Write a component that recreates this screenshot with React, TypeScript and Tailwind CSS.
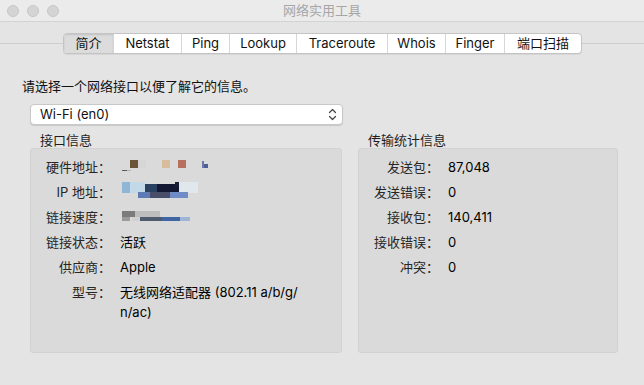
import React from 'react';

const tabs = [
  { label: '简介', w: 'w-[49px]', active: true },
  { label: 'Netstat', w: 'w-[68px]' },
  { label: 'Ping', w: 'w-[48px]' },
  { label: 'Lookup', w: 'w-[67px]' },
  { label: 'Traceroute', w: 'w-[91px]' },
  { label: 'Whois', w: 'w-[58px]' },
  { label: 'Finger', w: 'w-[59px]' },
  { label: '端口扫描', w: 'w-[77px]' },
];

// pixelated (censored) values
const HwBlur = () => (
  <svg width="100" height="20" className="block">
    <rect x="2" y="13" width="5" height="1" fill="#5a5a5a" />
    <rect x="7" y="13" width="4" height="1" fill="#b5b5b5" />
    <rect x="10" y="3" width="8" height="8" fill="#6b5538" />
    <rect x="18" y="3" width="8" height="8" fill="#d6d6d6" />
    <rect x="42" y="3" width="8" height="8" fill="#d8bd9c" />
    <rect x="58" y="3" width="8" height="8" fill="#b86f5e" />
    <rect x="82" y="4" width="2" height="7" fill="#6a78aa" />
    <rect x="84" y="7" width="4" height="4" fill="#4d5f99" />
  </svg>
);

const IpBlur = () => (
  <svg width="100" height="20" className="block">
    <rect x="2" y="0" width="8" height="11" fill="#8fb6d4" />
    <rect x="10" y="0" width="15" height="11" fill="#c3d9e7" />
    <rect x="25" y="2" width="12" height="9" fill="#2a4060" />
    <rect x="37" y="2" width="22" height="9" fill="#141833" />
    <rect x="55" y="-1" width="4" height="5" fill="#1d1d33" />
    <rect x="59" y="0" width="19" height="11" fill="#e0e8ee" />
    <rect x="18" y="10" width="12" height="6" fill="#5e7bb5" />
    <rect x="30" y="10" width="20" height="6" fill="#4a4d6a" />
    <rect x="50" y="10" width="18" height="6" fill="#6f8cc6" />
  </svg>
);

const SpeedBlur = () => (
  <svg width="100" height="20" className="block">
    <rect x="2" y="4" width="13" height="6" fill="#7b7b7b" />
    <rect x="15" y="4" width="25" height="6" fill="#bdbdbd" />
    <rect x="2" y="10" width="8" height="4" fill="#9a9a9a" />
    <rect x="12" y="10" width="8" height="4" fill="#d0d0d0" />
    <rect x="20" y="10" width="22" height="4" fill="#505a6e" />
    <rect x="42" y="10" width="18" height="4" fill="#3f66a3" />
    <rect x="60" y="10" width="10" height="4" fill="#9fb5d6" />
  </svg>
);

const leftRows: { label: string; value: React.ReactNode }[] = [
  { label: '硬件地址：', value: <HwBlur /> },
  { label: 'IP 地址：', value: <IpBlur /> },
  { label: '链接速度：', value: <SpeedBlur /> },
  { label: '链接状态：', value: '活跃' },
  { label: '供应商：', value: 'Apple' },
  {
    label: '型号：',
    value: (
      <>
        <span className="block">无线网络适配器 (802.11 a/b/g/</span>
        <span className="block">n/ac)</span>
      </>
    ),
  },
];

const rightRows = [
  { label: '发送包：', value: '87,048' },
  { label: '发送错误：', value: '0' },
  { label: '接收包：', value: '140,411' },
  { label: '接收错误：', value: '0' },
  { label: '冲突：', value: '0' },
];

function InfoBox({ title, rows, width }: { title: string; rows: { label: string; value: React.ReactNode }[]; width: string }) {
  return (
    <div className={`${width} flex flex-col`}>
      <div className="pl-[10px] h-[16px] leading-[16px] text-[#1e1e1e]">{title}</div>
      <div className="h-[205px] bg-[#dadada] border border-[#d2d2d2] rounded-[3px] pt-[8px]">
        <div className="grid grid-cols-[80px_1fr] gap-x-[9px] gap-y-[5px] leading-[20px]">
          {rows.map((r) => (
            <React.Fragment key={r.label}>
              <div className="text-right text-[#262626] whitespace-nowrap">{r.label}</div>
              <div className="text-black min-h-[20px]">{r.value}</div>
            </React.Fragment>
          ))}
        </div>
      </div>
    </div>
  );
}

export default function App() {
  return (
    <div
      className="w-[644px] h-[385px] bg-[#e4e4e4] flex flex-col text-[13px] overflow-hidden"
      style={{ fontFamily: 'Inter, "Noto Sans CJK SC", sans-serif' }}
    >
      {/* title bar */}
      <div className="relative h-[22px] bg-[#ebebeb] border-b border-[#d3d3d3] flex items-center">
        <div className="flex gap-[8px] pl-[7px]">
          <span className="w-[12px] h-[12px] rounded-full bg-[#d4d4d4] border border-[#c6c6c6]" />
          <span className="w-[12px] h-[12px] rounded-full bg-[#d4d4d4] border border-[#c6c6c6]" />
          <span className="w-[12px] h-[12px] rounded-full bg-[#d4d4d4] border border-[#c6c6c6]" />
        </div>
        <div className="absolute inset-0 flex items-center justify-center text-[#a6a6a6]">网络实用工具</div>
      </div>

      {/* body */}
      <div className="relative flex-1 flex flex-col">
        <div className="absolute left-0 right-0 top-[21px] h-px bg-[#cdcdcd]" />
        <div className="relative pt-[11px] pl-[63px] flex">
          <div className="flex h-[21px] bg-white border border-[#c4c4c4] rounded-[4px] shadow-[0_1px_0_rgba(0,0,0,0.06)] overflow-hidden">
            {tabs.map((t, i) => (
              <div
                key={t.label}
                className={`${t.w} flex items-center justify-center leading-none text-[#111] ${i > 0 ? 'border-l border-[#d6d6d6]' : ''} ${t.active ? 'bg-[#dcdcdc] shadow-[inset_0_1px_2px_rgba(0,0,0,0.12)]' : ''}`}
              >
                {t.label}
              </div>
            ))}
          </div>
        </div>

        <div className="mt-[22px] pl-[22px] leading-[20px] text-[#111]">请选择一个网络接口以便了解它的信息。</div>

        <div className="mt-[8px] ml-[30px] w-[313px] h-[21px] bg-white rounded-[4px] border border-[#c8c8c8] shadow-[0_1px_1px_rgba(0,0,0,0.12)] flex items-center justify-between pl-[9px] pr-[5px]">
          <span className="text-[#111]">Wi-Fi (en0)</span>
          <svg width="9" height="13" viewBox="0 0 9 13" fill="none" stroke="#444" strokeWidth="1.2" strokeLinecap="round" strokeLinejoin="round">
            <path d="M1.5 4.5 L4.5 1.5 L7.5 4.5" />
            <path d="M1.5 8.5 L4.5 11.5 L7.5 8.5" />
          </svg>
        </div>

        <div className="mt-[7px] ml-[30px] flex gap-[16px]">
          <InfoBox title="接口信息" rows={leftRows} width="w-[312px]" />
          <InfoBox title="传输统计信息" rows={rightRows} width="w-[260px]" />
        </div>
      </div>
    </div>
  );
}
